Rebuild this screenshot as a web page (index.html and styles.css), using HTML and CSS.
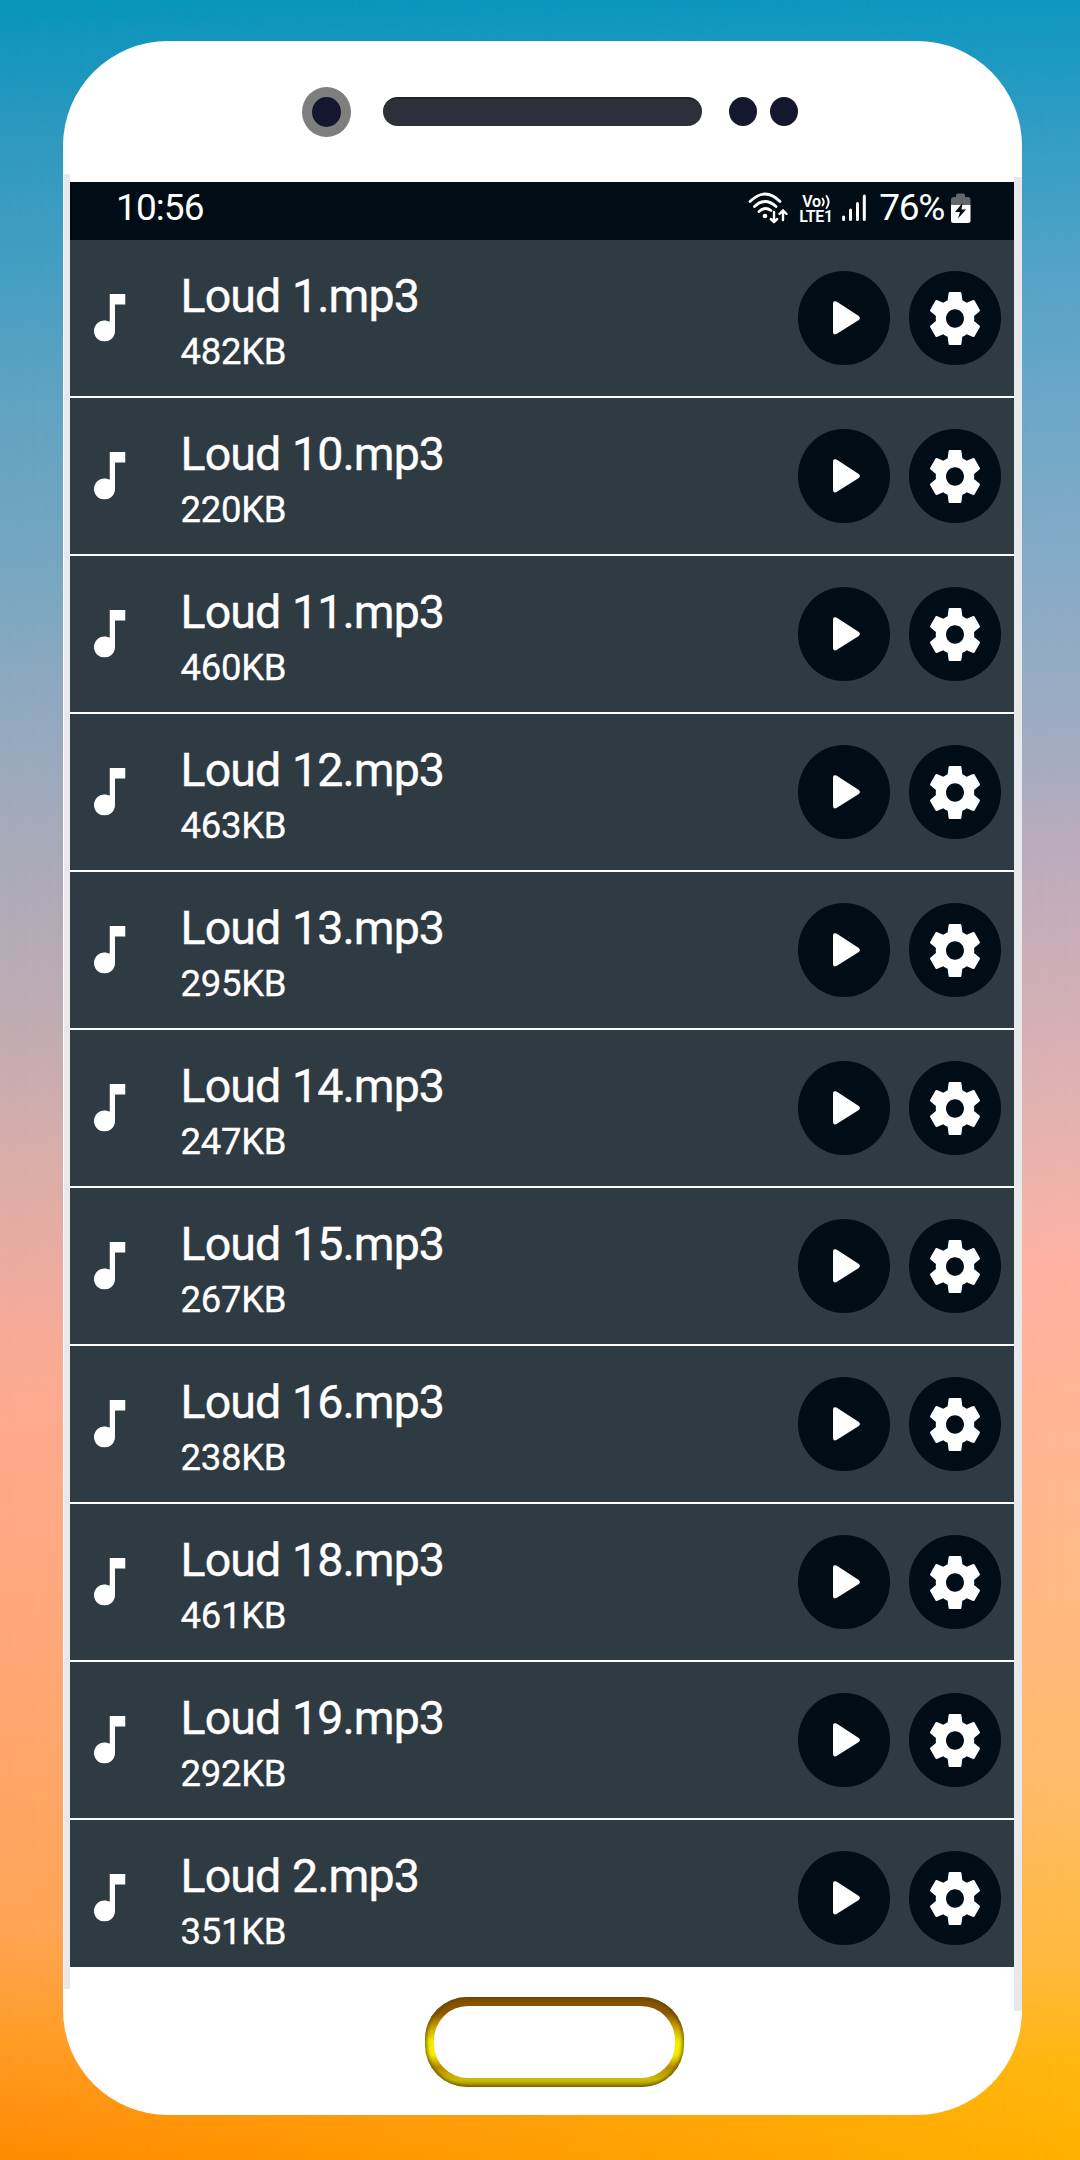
FILE: index.html
```
<!DOCTYPE html>
<html lang="en">
<head>
<meta charset="utf-8">
<title>Sounds</title>
<link rel="stylesheet" href="styles.css">
</head>
<body>
<svg class="defs" aria-hidden="true">
  <symbol id="note" viewBox="6 3 12 18" preserveAspectRatio="none"><path d="M12 3v10.550c-.59-.34-1.270-.55-2-.55-2.210 0-4 1.790-4 4s1.790 4 4 4 4-1.790 4-4V7h4V3h-6z"/></symbol>
  <symbol id="play" viewBox="0 0 27 34"><path d="M3.500 .6 L25.800 15 Q28 17 25.800 19 L3.500 33 Q0 34.500 0 31 V2.500 Q0 -.8 3.500 .6z"/></symbol>
  <symbol id="gear" viewBox="2.250 2 19.500 20" preserveAspectRatio="none"><path d="M19.430 12.980c.04-.32.07-.64.07-.98s-.03-.66-.07-.98l2.110-1.650c.19-.15.24-.42.12-.64l-2-3.460c-.12-.22-.39-.3-.61-.22l-2.490 1c-.52-.4-1.080-.73-1.690-.98l-.38-2.650C14.460 2.180 14.250 2 14 2h-4c-.25 0-.46.18-.49.42l-.38 2.650c-.61.25-1.170.59-1.690.98l-2.490-1c-.23-.09-.49 0-.61.22l-2 3.460c-.13.22-.07.49.12.64l2.110 1.650c-.04.32-.07.65-.07.98s.03.66.07.98l-2.110 1.650c-.19.15-.24.42-.12.64l2 3.460c.12.22.39.3.61.22l2.490-1c.52.4 1.080.73 1.690.98l.38 2.650c.03.24.24.42.49.42h4c.25 0 .46-.18.49-.42l.38-2.650c.61-.25 1.170-.59 1.690-.98l2.490 1c.23.09.49 0 .61-.22l2-3.460c.12-.22.07-.49-.12-.64l-2.110-1.650zM12 15.500c-1.930 0-3.500-1.570-3.500-3.500s1.570-3.500 3.500-3.500 3.500 1.570 3.500 3.500-1.570 3.500-3.500 3.500z"/></symbol>
</svg>
<div class="phone">
  <div class="top">
    <span class="camera"></span>
    <span class="speaker"></span>
    <span class="sensor"></span>
    <span class="sensor"></span>
  </div>
  <div class="middle">
    <div class="rail rail-left"></div>
    <div class="screen">
      <div class="status">
        <span class="time">10:56</span>
        <svg class="wifi" viewBox="0 0 40 32" fill="none" stroke="#fff" stroke-width="2.800" stroke-linecap="round">
          <path d="M2 9.500Q17 -5.500 32 9.500M6.500 14.500Q17 4.500 28 14.500M11 19.500Q17 14 23 18.500"/>
          <circle cx="17" cy="24" r="2.300" fill="#fff" stroke="none"/>
          <path d="M26 20V30M22.800 27L26 30L29.200 27M35 28V19M31.500 22L35 18.500L38.500 22" stroke-width="2.400"/>
        </svg>
        <div class="lte"><span class="vo">Vo<svg class="waves" viewBox="0 0 10 14" fill="none" stroke="#fff" stroke-width="1.900" stroke-linecap="round"><path d="M1.500 3.500Q4 7 1.500 10.500M5.500 1Q9.800 7 5.500 13"/></svg></span><span>LTE1</span></div>
        <svg class="signal" viewBox="0 0 24 28" stroke="#fff" stroke-width="3" stroke-linecap="round"><path d="M1.600 23V25.500M8.500 16V25.500M15.500 9.500V25.500M22.300 2V25.500"/></svg>
        <span class="percent">76%</span>
        <svg class="battery" viewBox="0 0 20 31"><path d="M5 4V2Q5 .5 6.500 .5H12.500Q14 .5 14 2V4H17Q19.500 4 19.500 7V12H0V7Q0 4 2.500 4z" fill="#62666d"/><path d="M0 12H19.500V27.500Q19.500 30 17 30H2.500Q0 30 0 27.500z" fill="#fff"/><path d="M11.500 10L4 19H9L7 25.500L15 16.500H10.500z" fill="#000c16"/></svg>
      </div>
      <ul class="list" id="list"></ul>
    </div>
    <div class="rail rail-right"></div>
  </div>
  <div class="bottom"><div class="home"><div class="home-inner"></div></div></div>
</div>
<template id="row">
  <li class="row">
    <svg class="note"><use href="#note"/></svg>
    <div class="info"><div class="name"></div><div class="size"></div></div>
    <button class="btn" aria-label="Play"><svg class="play"><use href="#play"/></svg></button>
    <button class="btn" aria-label="Settings"><svg class="gear"><use href="#gear"/></svg></button>
  </li>
</template>
<script src="app.js"></script>
</body>
</html>
```
FILE: styles.css
```
* { box-sizing: border-box; }
html, body { margin: 0; }
body {
  width: 1080px;
  height: 2160px;
  overflow: hidden;
  display: flex;
  flex-direction: column;
  padding: 41px 58px 45px 63px;
  font-family: Roboto, sans-serif;
  color: #fff;
  background: linear-gradient(180deg, #0795bc 0%, #2f99bf 6.400%, #459fc3 12.800%, #62a3c2 19.100%, #74a6c0 25.500%, #93a9c0 33.200%, #adabb8 40.800%, #bfacb3 47.200%, #daaea8 54.200%, #f5aa9a 61.200%, #ffa98c 66.300%, #ffa777 76.500%, #ffa456 89.300%, #ff9c28 94.400%, #ff8a00 100%);
}
/* warmer right side of the sunset, faded in from the left */
body::before {
  content: "";
  position: absolute;
  inset: 0;
  z-index: -1;
  background: linear-gradient(180deg, #0d97c0 0%, #339dc4 6.400%, #56a3c7 12.800%, #77a9c8 21.700%, #8eabc5 28.700%, #9eabc2 33.800%, #bdabbc 39.500%, #d5afb4 47.200%, #e8b2ae 52.900%, #ffb1a3 58.700%, #ffb596 64.400%, #ffb985 73.300%, #ffbb68 82.900%, #ffb93a 91.200%, #ffb60e 95.700%, #ffb000 100%);
  -webkit-mask-image: linear-gradient(90deg, transparent, #000);
  mask-image: linear-gradient(90deg, transparent, #000);
}
.defs { display: none; }
.phone {
  height: 2074px;
  display: flex;
  flex-direction: column;
  background: #fff;
  border-radius: 105px;
}
.top {
  height: 141px;
  flex: none;
  display: flex;
  align-items: center;
  padding: 0 0 0 239px;
}
.camera {
  width: 49px;
  height: 50px;
  border: 10.500px solid #7e7e7e;
  border-radius: 50%;
  background: #15172f;
}
.speaker {
  width: 319px;
  height: 29px;
  margin: 0 27px 0 32px;
  border-radius: 15px;
  background: #2d2f3a;
  border-top: 2px solid #202127;
}
.sensor {
  width: 28px;
  height: 29px;
  margin-right: 13px;
  border-radius: 50%;
  background: #15172f;
}
.middle {
  height: 1785px;
  flex: none;
  display: flex;
}
.rail { width: 8px; flex: none; background: #e8e9eb; }
.rail-left { width: 7px; height: 1815px; margin-top: -8px; border-left: 1px solid #fff; }
.rail-right { height: 1834px; margin-top: -5px; }
.screen {
  width: 944px;
  flex: none;
  overflow: hidden;
  display: flex;
  flex-direction: column;
  background: #2f3b43;
}
.status {
  height: 58px;
  flex: none;
  display: flex;
  align-items: flex-start;
  background: #000c16;
  padding: 0 43px 0 46px;
}
.time { font-size: 37px; line-height: 51px; letter-spacing: -.9px; margin-right: auto; }
.wifi { width: 40px; height: 32px; margin: 10px 11px 0 0; }
.lte { width: 36px; margin: 12px 7px 0 0; font-size: 16px; line-height: 16px; font-weight: 600; letter-spacing: -.3px; display: flex; flex-direction: column; }
.vo { display: flex; padding-left: 3px; height: 15px; }
.waves { width: 10px; height: 14px; margin-top: 1px; }
.signal { width: 24px; height: 28px; margin: 12px 13px 0 0; overflow: visible; }
.percent { font-size: 37px; line-height: 51px; letter-spacing: -1.300px; margin-right: 7px; }
.battery { width: 20px; height: 31px; margin-top: 11px; }
.list { list-style: none; margin: 0; padding: 0; }
.row {
  height: 158px;
  border-bottom: 2px solid #fbfdfd;
  display: flex;
  align-items: center;
  padding: 0 13.500px 0 24px;
}
.note { width: 31.500px; height: 47.500px; fill: #fff; margin-right: 55px; }
.info { flex: 1; padding-top: 11px; }
.name { font-size: 46.500px; line-height: 56px; letter-spacing: -.9px; word-spacing: 1px; white-space: nowrap; -webkit-text-stroke: .4px #fff; }
.size { font-size: 36.500px; line-height: 56px; letter-spacing: -.3px; -webkit-text-stroke: .3px #fff; }
.btn {
  width: 92px;
  height: 94.500px;
  border: 0;
  padding: 0;
  border-radius: 50%;
  background: #000c16;
  fill: #fff;
  display: flex;
  align-items: center;
  justify-content: center;
}
.btn + .btn { margin-left: 19px; }
.play { width: 27px; height: 34px; margin-left: 5px; }
.gear { width: 50px; height: 53px; }
.bottom {
  flex: 1;
  display: flex;
  padding: 30px 0 0 362px;
}
.home {
  width: 259px;
  height: 90px;
  padding: 9px;
  border-radius: 42px;
  background: linear-gradient(180deg, #805000 0%, #8c5700 18%, #c79a00 32%, #f5ee00 50%, #f5ee00 64%, #b98b00 78%, #cdbd00 92%, #a89500 100%);
  box-shadow: inset 0 0 4px 1px #5c4300;
}
.home-inner { height: 100%; border-radius: 34px; background: #fff; }
```
FILE: app.js
```
const sounds = [
  ["Loud 1.mp3", "482KB"],
  ["Loud 10.mp3", "220KB"],
  ["Loud 11.mp3", "460KB"],
  ["Loud 12.mp3", "463KB"],
  ["Loud 13.mp3", "295KB"],
  ["Loud 14.mp3", "247KB"],
  ["Loud 15.mp3", "267KB"],
  ["Loud 16.mp3", "238KB"],
  ["Loud 18.mp3", "461KB"],
  ["Loud 19.mp3", "292KB"],
  ["Loud 2.mp3", "351KB"]
];
const list = document.getElementById("list");
const template = document.getElementById("row");
for (const [name, size] of sounds) {
  const row = template.content.cloneNode(true);
  row.querySelector(".name").textContent = name;
  row.querySelector(".size").textContent = size;
  list.append(row);
}
```
